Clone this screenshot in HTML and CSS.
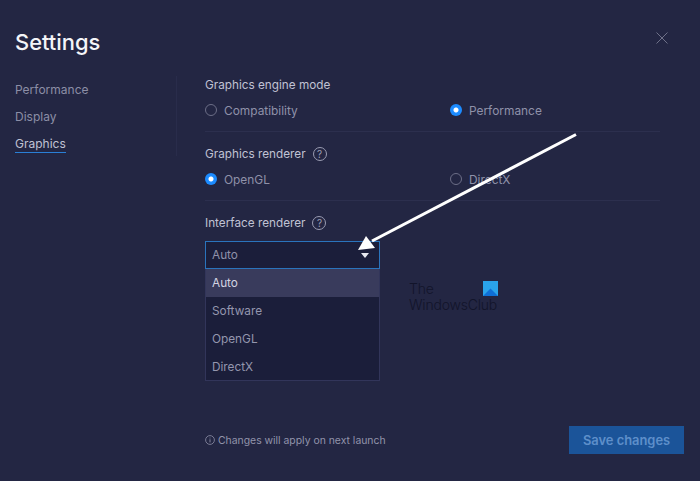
FILE: index.html
```html
<!DOCTYPE html>
<html lang="en">
<head>
<meta charset="utf-8">
<title>Settings</title>
<link rel="stylesheet" href="styles.css">
</head>
<body>
<div class="app">
  <header class="top">
    <h1 class="title">Settings</h1>
    <svg class="close" width="12" height="12" viewBox="0 0 12 12"><path d="M.5.5l11 11M11.500.5l-11 11" stroke="#6f7189" stroke-width="1" fill="none"/></svg>
  </header>
  <div class="main">
    <nav class="nav">
      <a class="nav-item">Performance</a>
      <a class="nav-item">Display</a>
      <a class="nav-item active">Graphics</a>
    </nav>
    <div class="content">
      <section class="group">
        <div class="label">Graphics engine mode</div>
        <div class="options">
          <div class="option"><span class="radio"></span>Compatibility</div>
          <div class="option"><span class="radio on"></span>Performance</div>
        </div>
      </section>
      <section class="group">
        <div class="label">Graphics renderer <span class="help">?</span></div>
        <div class="options">
          <div class="option"><span class="radio on"></span>OpenGL</div>
          <div class="option"><span class="radio"></span>DirectX</div>
        </div>
      </section>
      <section class="group last">
        <div class="label">Interface renderer <span class="help">?</span></div>
        <div class="select"><span>Auto</span><span class="caret"></span></div>
        <div class="menu">
          <div class="menu-item current">Auto</div>
          <div class="menu-item">Software</div>
          <div class="menu-item">OpenGL</div>
          <div class="menu-item">DirectX</div>
        </div>
      </section>
    </div>
  </div>
  <footer class="foot">
    <div class="note">
      <svg width="10" height="10" viewBox="0 0 10 10"><circle cx="5" cy="5" r="4.400" fill="none" stroke="#8f91a8" stroke-width=".8"/><path d="M5 2.600v.8M5 4.300v3.100" stroke="#8f91a8" stroke-width=".9"/></svg>
      Changes will apply on next launch
    </div>
    <button class="save">Save changes</button>
  </footer>
  <div class="mark">
    <div class="mark-text">The<br>WindowsClub</div>
    <svg class="mark-logo" width="15" height="15" viewBox="0 0 15 15"><rect width="15" height="15" fill="#2aa3ea"/><path d="M0 15L7.500 7.500 15 15z" fill="#0f6fd6"/></svg>
  </div>
  <svg class="arrow" width="700" height="481" viewBox="0 0 700 481"><path d="M576 134.500L372 241" stroke="#fff" stroke-width="3" fill="none"/><path d="M358 250L366 236 375 248z" fill="#fff"/></svg>
</div>
</body>
</html>
```
FILE: styles.css
```css
* { box-sizing: border-box; }
html, body { margin: 0; padding: 0; }
body { width: 700px; height: 481px; overflow: hidden; background: #232643; font-family: Inter, "Noto Sans", sans-serif; color: #a1a3ba; }
.app { position: relative; width: 700px; height: 481px; display: flex; flex-direction: column; }
.top { height: 76px; padding: 29px 32px 0 15px; display: flex; justify-content: space-between; align-items: flex-start; }
.title { margin: 0; font-size: 21.900px; line-height: 26px; font-weight: 500; color: #f4f5f8; }
.close { margin-top: 3px; }
.main { display: flex; height: 350px; }
.nav { width: 161px; height: 75px; padding: 5px 0 0 15px; border-right: 1px solid #292c4b; display: flex; flex-direction: column; align-items: flex-start; gap: 10px; box-sizing: content-box; }
.nav-item { font-size: 12px; line-height: 17px; color: #8c8ea6; }
.nav-item.active { color: #c0c2d4; border-bottom: 1px solid #2a7fd6; }
.content { width: 455px; margin-left: 28px; }
.group { height: 69px; border-bottom: 1px solid #2c2f4e; }
.group:first-child { height: 56px; }
.group + .group { padding-top: 13px; }
.group.last { border: 0; height: auto; }
.label { font-size: 11.750px; line-height: 18px; color: #c0c2d4; display: flex; align-items: center; gap: 7px; }
.options { display: grid; grid-template-columns: 245px 1fr; margin-top: 7px; }
.option { display: flex; align-items: center; gap: 7px; font-size: 11.900px; line-height: 19px; color: #8f91a9; }
.radio { width: 12px; height: 12px; border-radius: 50%; border: 1.300px solid #6c6e87; margin-bottom: 2px; }
.radio.on { border: 0; background: radial-gradient(circle, #fff 0 2px, #1c8bff 3px); }
.help { width: 14px; height: 14px; border: 1px solid #9a9cb2; border-radius: 50%; font-size: 10px; line-height: 12px; text-align: center; color: #9a9cb2; }
.select { margin-top: 9px; width: 175px; height: 28px; background: #1b1e3a; border: 1px solid #2a74bd; padding: 0 8px 0 6px; display: flex; justify-content: space-between; align-items: center; font-size: 11.800px; color: #8f91a9; }
.caret { width: 0; height: 0; border-left: 4px solid transparent; border-right: 4px solid transparent; border-top: 5px solid #e8e9f0; margin-top: 1px; margin-right: 2px; }
.menu { width: 175px; height: 112px; background: #1b1e3a; border: 1px solid #32355a; border-top: 0; }
.menu-item { height: 28px; line-height: 28px; padding-left: 6px; font-size: 11.800px; color: #9496ae; }
.menu-item.current { background: #393b5c; color: #d3d4e2; }
.foot { display: flex; justify-content: space-between; align-items: center; padding: 0 16px 0 205px; height: 28px; }
.note { display: flex; align-items: center; gap: 3px; font-size: 10.400px; color: #9294ab; }
.save { width: 115px; height: 28px; border: 0; background: #1b5499; color: #5e8fca; font-family: inherit; font-size: 12.900px; font-weight: 600; }
.mark { position: absolute; left: 409px; top: 281px; width: 90px; height: 32px; }
.mark-text { font-size: 14px; line-height: 16px; color: #12142a; font-weight: 300; letter-spacing: -.2px; }
.mark-logo { position: absolute; right: 1px; top: 0; }
.arrow { position: absolute; left: 0; top: 0; }
```
